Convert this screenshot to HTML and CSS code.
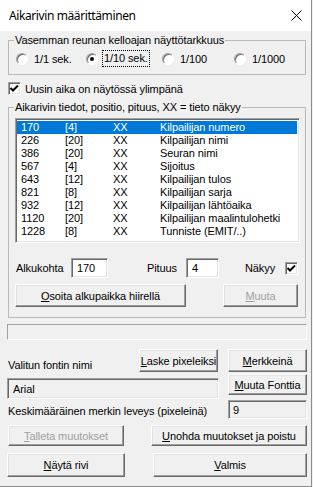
FILE: index.html
```html
<!DOCTYPE html>
<html lang="fi">
<head>
    <meta charset="UTF-8">
    <meta name="viewport" content="width=device-width, initial-scale=1.0">
    <title>Aikarivin määrittäminen</title>
    <link rel="stylesheet" href="styles.css">
</head>
<body>
    <div class="window">
        <div class="titlebar">
            <span class="title">Aikarivin määrittäminen</span>
            <svg class="close" width="11" height="11" viewBox="0 0 11 11">
                <path d="M0.5 0.5 L10.5 10.5 M10.5 0.5 L0.5 10.5" stroke="#000" stroke-width="1" fill="none"/>
            </svg>
        </div>

        <div class="dialog">
            <div class="group group-accuracy">
                <span class="legend">Vasemman reunan kelloajan näyttötarkkuus</span>
                <div class="radios">
                    <label class="radio"><span class="radio-dot"></span><span>1/1 sek.</span></label>
                    <label class="radio checked"><span class="radio-dot"></span><span class="focus">1/10 sek.</span></label>
                    <label class="radio"><span class="radio-dot"></span><span>1/100</span></label>
                    <label class="radio"><span class="radio-dot"></span><span>1/1000</span></label>
                </div>
            </div>

            <label class="check-row">
                <span class="checkbox">
                    <svg width="11" height="11" viewBox="0 0 11 11"><polyline points="1.5,5 4,7.5 9,2.5" stroke="#000" stroke-width="2" fill="none"/></svg>
                </span>
                Uusin aika on näytössä ylimpänä
            </label>

            <div class="group group-fields">
                <span class="legend">Aikarivin tiedot, positio, pituus, XX = tieto näkyy</span>
                <div class="listbox">
                    <div class="row selected"><span>170</span><span>[4]</span><span>XX</span><span>Kilpailijan numero</span></div>
                    <div class="row"><span>226</span><span>[20]</span><span>XX</span><span>Kilpailijan nimi</span></div>
                    <div class="row"><span>386</span><span>[20]</span><span>XX</span><span>Seuran nimi</span></div>
                    <div class="row"><span>567</span><span>[4]</span><span>XX</span><span>Sijoitus</span></div>
                    <div class="row"><span>643</span><span>[12]</span><span>XX</span><span>Kilpailijan tulos</span></div>
                    <div class="row"><span>821</span><span>[8]</span><span>XX</span><span>Kilpailijan sarja</span></div>
                    <div class="row"><span>932</span><span>[12]</span><span>XX</span><span>Kilpailijan lähtöaika</span></div>
                    <div class="row"><span>1120</span><span>[20]</span><span>XX</span><span>Kilpailijan maalintulohetki</span></div>
                    <div class="row"><span>1228</span><span>[8]</span><span>XX</span><span>Tunniste (EMIT/..)</span></div>
                </div>

                <div class="field-row">
                    <span class="label-start">Alkukohta</span>
                    <span class="textbox box-start">170</span>
                    <span class="label-length">Pituus</span>
                    <span class="textbox box-length">4</span>
                    <span class="label-visible">Näkyy</span>
                    <span class="checkbox">
                        <svg width="11" height="11" viewBox="0 0 11 11"><polyline points="1.5,5 4,7.5 9,2.5" stroke="#000" stroke-width="2" fill="none"/></svg>
                    </span>
                </div>

                <div class="button-row">
                    <button class="btn btn-point"><u>O</u>soita alkupaikka hiirellä</button>
                    <button class="btn btn-change" disabled><u>M</u>uuta</button>
                </div>
            </div>

            <div class="statusbar"></div>

            <div class="font-row-a">
                <span class="font-label">Valitun fontin nimi</span>
                <button class="btn btn-small"><u>L</u>aske pixeleiksi</button>
                <button class="btn btn-small"><u>M</u>erkkeinä</button>
            </div>

            <div class="font-row-b">
                <span class="readonly font-name">Arial</span>
                <button class="btn btn-small btn-font"><u>M</u>uuta Fonttia</button>
            </div>

            <div class="font-row-c">
                <span class="width-label">Keskimääräinen merkin leveys (pixeleinä)</span>
                <span class="readonly char-width">9</span>
            </div>

            <div class="action-row-a">
                <button class="btn btn-save" disabled><u>T</u>alleta muutokset</button>
                <button class="btn btn-cancel"><u>U</u>nohda muutokset ja poistu</button>
            </div>

            <div class="action-row-b">
                <button class="btn btn-show"><u>N</u>äytä rivi</button>
                <button class="btn btn-done"><u>V</u>almis</button>
            </div>
        </div>
    </div>
</body>
</html>
```

FILE: styles.css
```css
body {
    margin: 0;
    padding: 0;
    background-color: #f0f0f0;
    color: #000;
    font-family: "Liberation Sans", Arial, sans-serif;
    font-size: 11px;
    letter-spacing: -0.1px;
}

.window {
    width: 312px;
    height: 487px;
    box-sizing: border-box;
    border-right: 1px solid #8c8c8c;
    border-bottom: 1px solid #8c8c8c;
    background: #f0f0f0;
}

.titlebar {
    height: 31px;
    box-sizing: border-box;
    padding: 0 9px 0 9px;
    background: #fff;
    display: flex;
    align-items: center;
    justify-content: space-between;
}

.title {
    font-family: "Noto Sans", sans-serif;
    font-size: 12px;
    letter-spacing: -0.4px;
}

.close {
    display: block;
}

.dialog {
    padding: 0 4px 0 7px;
}

/* group boxes */
.group {
    position: relative;
    margin: 0 1px;
    box-sizing: border-box;
    border: 1px solid #b9b9b9;
}

.legend {
    position: absolute;
    top: -7px;
    left: 5px;
    padding: 0 1px;
    line-height: 13px;
    background: #f0f0f0;
}

.group-accuracy {
    margin-top: 9px;
    height: 35px;
    padding: 9px 0 0 7px;
}

.radios {
    display: grid;
    grid-template-columns: 70px 76px 72px auto;
    align-items: center;
    height: 17px;
}

.radio {
    display: flex;
    align-items: center;
    gap: 6px;
}

.radio-dot {
    position: relative;
    width: 12px;
    height: 12px;
    box-sizing: border-box;
    border-radius: 50%;
    border: 1px solid;
    border-color: #a0a0a0 #fff #fff #a0a0a0;
    background: #fff;
    box-shadow: inset 1px 1px 0 #696969;
}

.radio.checked .radio-dot::after {
    content: "";
    position: absolute;
    left: 3px;
    top: 3px;
    width: 4px;
    height: 4px;
    border-radius: 50%;
    background: #000;
}

.focus {
    margin-left: -2px;
    padding: 1px;
    border: 1px dotted #000;
    line-height: 13px;
}

.check-row {
    display: flex;
    align-items: center;
    gap: 4px;
    height: 13px;
    margin: 7px 0 0 1px;
}

.checkbox {
    width: 13px;
    height: 13px;
    box-sizing: border-box;
    border: 1px solid;
    border-color: #a0a0a0 #fff #fff #a0a0a0;
    box-shadow: inset 1px 1px 0 #696969, inset -1px -1px 0 #e3e3e3;
    background: #fff;
    display: flex;
    align-items: center;
    justify-content: center;
}

.checkbox svg {
    display: block;
}

.group-fields {
    margin-top: 12px;
    height: 211px;
    padding: 10px 0 0 6px;
}

/* list */
.listbox {
    width: 285px;
    height: 125px;
    box-sizing: border-box;
    padding: 2px 2px 0 1px;
    background: #fff;
    border: 1px solid;
    border-color: #a0a0a0 #fff #fff #a0a0a0;
    box-shadow: inset 1px 1px 0 #696969, inset -1px -1px 0 #e3e3e3;
}

.row {
    display: grid;
    grid-template-columns: 44px 48px 47px 1fr;
    height: 13px;
    line-height: 13px;
    padding-left: 4px;
    white-space: nowrap;
}

.row.selected {
    background: #0078d7;
    color: #fff;
}

/* text boxes */
.field-row {
    display: flex;
    align-items: center;
    height: 20px;
    margin-top: 15px;
}

.label-start {
    width: 55px;
    margin-left: 1px;
}

.label-length {
    width: 39px;
    margin-left: 39px;
}

.label-visible {
    width: 40px;
    margin-left: 26px;
}

.textbox,
.readonly {
    box-sizing: border-box;
    display: flex;
    align-items: center;
    border: 1px solid;
    border-color: #a0a0a0 #fff #fff #a0a0a0;
    box-shadow: inset 1px 1px 0 #696969, inset -1px -1px 0 #e3e3e3;
}

.textbox {
    height: 20px;
    padding-left: 5px;
    background: #fff;
}

.box-start {
    width: 37px;
}

.box-length {
    width: 33px;
}

.readonly {
    background: #f0f0f0;
}

/* buttons */
.btn {
    box-sizing: border-box;
    margin: 0;
    padding: 0;
    font-family: inherit;
    font-size: 11px;
    letter-spacing: -0.1px;
    color: #000;
    background: #f0f0f0;
    border: 1px solid;
    border-color: #fff #696969 #696969 #fff;
    box-shadow: inset -1px -1px 0 #a0a0a0, inset 1px 1px 0 #e3e3e3;
    border-radius: 0;
    cursor: pointer;
}

.btn:disabled {
    color: #a0a0a0;
    cursor: default;
}

.button-row {
    display: flex;
    justify-content: space-between;
    margin-top: 6px;
    padding-right: 7px;
}

.btn-point {
    width: 171px;
    height: 23px;
}

.btn-change {
    width: 75px;
    height: 23px;
}

.statusbar {
    height: 16px;
    box-sizing: border-box;
    margin-top: 6px;
    border: 1px solid;
    border-color: #a0a0a0 #fff #fff #a0a0a0;
}

/* font section */
.font-row-a {
    display: flex;
    align-items: flex-end;
    height: 23px;
    margin-top: 9px;
}

.font-label {
    flex: 1;
    margin-left: 1px;
    line-height: 13px;
}

.btn-small {
    width: 79px;
    height: 23px;
}

.btn-small + .btn-small {
    margin-left: 10px;
}

.font-row-b {
    display: flex;
    align-items: flex-start;
    margin-top: 2px;
    height: 25px;
}

.btn-font {
    height: 21px;
    margin-left: auto;
}

.font-name {
    width: 212px;
    height: 21px;
    margin-top: 4px;
    padding-left: 5px;
}

.font-row-c {
    display: flex;
    align-items: center;
    height: 19px;
    margin-top: 1px;
}

.width-label {
    margin-left: 1px;
    padding-top: 3px;
}

.char-width {
    width: 79px;
    height: 19px;
    margin-left: auto;
    padding-left: 4px;
}

.action-row-a {
    display: flex;
    justify-content: space-between;
    margin-top: 6px;
}

.btn-save {
    width: 116px;
    height: 21px;
    margin-left: 1px;
}

.btn-cancel {
    width: 156px;
    height: 21px;
}

.action-row-b {
    display: flex;
    justify-content: space-between;
    margin-top: 7px;
}

.btn-show {
    width: 118px;
    height: 24px;
}

.btn-done {
    width: 154px;
    height: 24px;
}
```
